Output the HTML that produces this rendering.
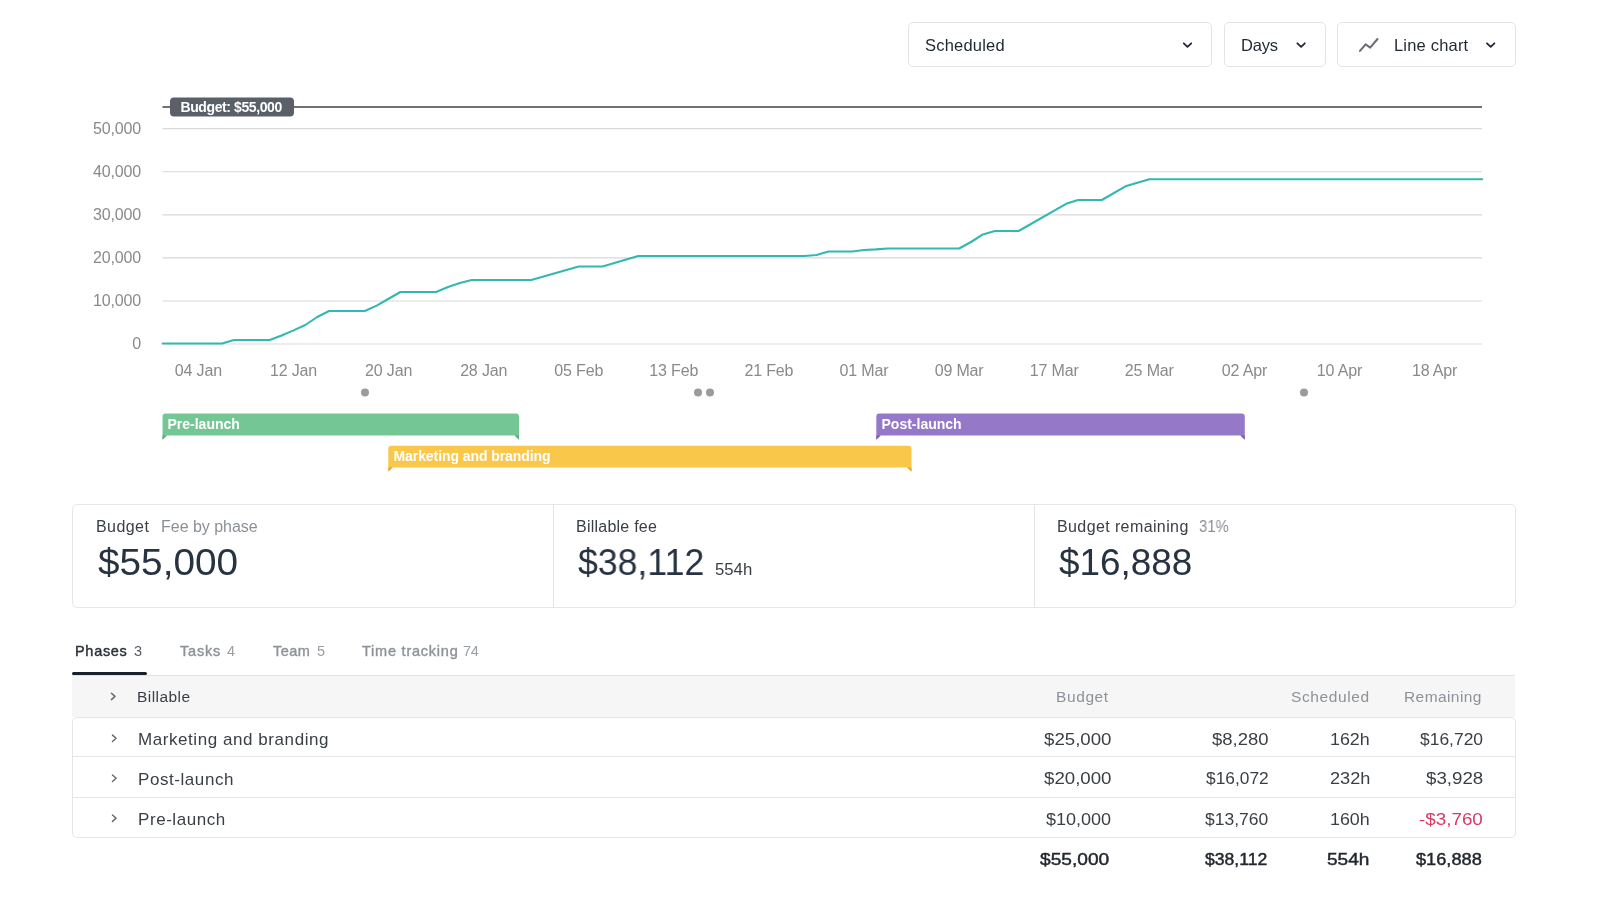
<!DOCTYPE html>
<html>
<head>
<meta charset="utf-8">
<style>
html,body{margin:0;padding:0;background:#fff;width:1600px;height:904px;overflow:hidden;font-family:"Liberation Sans",sans-serif;}
.abs{position:absolute;}
.t{position:absolute;white-space:nowrap;line-height:1;will-change:transform;}
.dd{position:absolute;top:22px;height:43px;border:1px solid #e2e4e9;border-radius:5px;box-sizing:content-box;background:#fff;}
.card{position:absolute;left:72px;top:504px;width:1442px;height:101px;border:1px solid #e3e3e3;border-radius:6px;}
.div{position:absolute;top:0;width:1px;height:101px;background:#e3e3e3;}
</style>
</head>
<body>

<!-- Dropdowns -->
<div class="dd" style="left:908px;width:302px;"></div>
<div class="dd" style="left:1224px;width:100px;"></div>
<div class="dd" style="left:1337px;width:177px;"></div>
<svg class="abs" style="left:0;top:0" width="1600" height="80">
  <polyline points="1183.8,43.3 1187.5,46.8 1191.2,43.3" fill="none" stroke="#1f2733" stroke-width="1.8" stroke-linecap="round" stroke-linejoin="round"/>
  <polyline points="1297.4,43.3 1301.1,46.8 1304.8,43.3" fill="none" stroke="#1f2733" stroke-width="1.8" stroke-linecap="round" stroke-linejoin="round"/>
  <polyline points="1487.0,43.3 1490.7,46.8 1494.4,43.3" fill="none" stroke="#1f2733" stroke-width="1.8" stroke-linecap="round" stroke-linejoin="round"/>
  <polyline points="1360,50.9 1365.6,44.3 1370.2,47.6 1377.5,39" fill="none" stroke="#686c72" stroke-width="2" stroke-linecap="round" stroke-linejoin="round"/>
</svg>

<!-- Chart -->
<svg class="abs" style="left:0;top:80px;will-change:transform;" width="1600" height="400" viewBox="0 80 1600 400">
  <g stroke="#d9d9d9" stroke-width="1.1">
    <line x1="162.5" y1="128.6" x2="1482" y2="128.6"/>
    <line x1="162.5" y1="171.8" x2="1482" y2="171.8"/>
    <line x1="162.5" y1="214.9" x2="1482" y2="214.9"/>
    <line x1="162.5" y1="257.9" x2="1482" y2="257.9"/>
    <line x1="162.5" y1="301.0" x2="1482" y2="301.0"/>
    <line x1="162.5" y1="344.0" x2="1482" y2="344.0"/>
  </g>
  <line x1="162.5" y1="107" x2="1482" y2="107" stroke="#717171" stroke-width="2"/>
  <g font-family="Liberation Sans" font-size="16" letter-spacing="-0.15" fill="#8a8a8a" text-anchor="end">
    <text x="141" y="134">50,000</text>
    <text x="141" y="177">40,000</text>
    <text x="141" y="220">30,000</text>
    <text x="141" y="263">20,000</text>
    <text x="141" y="306">10,000</text>
    <text x="141" y="349">0</text>
  </g>
  <g font-family="Liberation Sans" font-size="16" letter-spacing="-0.15" fill="#8a8a8a" text-anchor="middle">
    <text x="198.4" y="376">04 Jan</text>
    <text x="293.5" y="376">12 Jan</text>
    <text x="388.6" y="376">20 Jan</text>
    <text x="483.7" y="376">28 Jan</text>
    <text x="578.7" y="376">05 Feb</text>
    <text x="673.8" y="376">13 Feb</text>
    <text x="768.9" y="376">21 Feb</text>
    <text x="864.0" y="376">01 Mar</text>
    <text x="959.1" y="376">09 Mar</text>
    <text x="1054.2" y="376">17 Mar</text>
    <text x="1149.3" y="376">25 Mar</text>
    <text x="1244.4" y="376">02 Apr</text>
    <text x="1339.5" y="376">10 Apr</text>
    <text x="1434.6" y="376">18 Apr</text>
  </g>
  <polyline fill="none" stroke="#33b8b0" stroke-width="2.1" stroke-linejoin="round" stroke-linecap="round"
    points="162.7,343.5 222.1,343.5 234.0,340 269.7,340 281.6,335.5 293.5,330.4 305.3,325 317.2,317 329.1,311 364.8,311 376.7,305.6 388.6,298.75 400.4,292 436.1,292 448.0,287 459.9,283 471.8,280 531.2,280 578.7,266.5 602.5,266.5 638.2,256 804.6,256 816.5,255 828.4,251.5 852.1,251.5 864.0,250 875.9,249.4 887.8,248.5 959.1,248.5 971.0,242 982.9,234.4 994.8,231 1018.6,231 1066.1,203.8 1078.0,200 1101.8,200 1125.5,186.3 1137.4,182.8 1149.3,179.2 1482.2,179.2"/>
  <!-- budget label -->
  <rect x="170" y="97.5" width="124" height="19" rx="4" fill="#5a6068"/>
  <text x="180.5" y="111.5" font-family="Liberation Sans" font-weight="bold" font-size="14" letter-spacing="-0.4" fill="#fff">Budget: $55,000</text>
  <!-- dots -->
  <g fill="#9b9b9b">
    <circle cx="365" cy="392.4" r="4"/>
    <circle cx="698" cy="392.4" r="4"/>
    <circle cx="710" cy="392.4" r="4"/>
    <circle cx="1304" cy="392.4" r="4"/>
  </g>
  <!-- phase bars -->
  <path fill="#74c795" d="M162.5,439.5 L162.5,416.6 Q162.5,413.6 165.5,413.6 L516,413.6 Q519,413.6 519,416.6 L519,439.5 L515,435.5 L166.5,435.5 Z"/>
  <path fill="#f9c74a" d="M388.3,471.5 L388.3,448.7 Q388.3,445.7 391.3,445.7 L908.5,445.7 Q911.5,445.7 911.5,448.7 L911.5,471.5 L907.5,467.5 L392.3,467.5 Z"/>
  <path fill="#9678c9" d="M876.3,439.5 L876.3,416.6 Q876.3,413.6 879.3,413.6 L1241.8,413.6 Q1244.8,413.6 1244.8,416.6 L1244.8,439.5 L1240.8,435.5 L880.3,435.5 Z"/>
  <g>
    <path fill="#5fae80" d="M162.5,435.5 L167,435.5 L162.5,439.8 Z"/>
    <path fill="#5fae80" d="M519,435.5 L514.5,435.5 L519,439.8 Z"/>
    <path fill="#dcae3c" d="M388.3,467.5 L392.8,467.5 L388.3,471.8 Z"/>
    <path fill="#dcae3c" d="M911.5,467.5 L907,467.5 L911.5,471.8 Z"/>
    <path fill="#7d62ad" d="M876.3,435.5 L880.8,435.5 L876.3,439.8 Z"/>
    <path fill="#7d62ad" d="M1244.8,435.5 L1240.3,435.5 L1244.8,439.8 Z"/>
  </g>
  <g font-family="Liberation Sans" font-weight="bold" font-size="14" fill="#fff">
    <text x="167.5" y="429.2">Pre-launch</text>
    <text x="393.5" y="461" letter-spacing="-0.08">Marketing and branding</text>
    <text x="881.5" y="429.2">Post-launch</text>
  </g>
</svg>

<!-- GEN START -->
<div class="t" style="left:925.3px;top:36.83px;font-size:16.5px;font-weight:400;letter-spacing:0.2px;color:#1f2733;">Scheduled</div>
<div class="t" style="left:1241.3px;top:36.83px;font-size:16.5px;font-weight:400;letter-spacing:-0.214px;color:#1f2733;">Days</div>
<div class="t" style="left:1394.0px;top:36.83px;font-size:16.5px;font-weight:400;letter-spacing:0.191px;color:#1f2733;">Line chart</div>
<div class="abs" style="left:72px;top:504px;width:1444px;height:104px;box-sizing:border-box;border:1px solid #e6e6e6;border-radius:5px;"></div>
<div class="abs" style="left:553px;top:505px;width:1px;height:102px;background:#e4e4e4;"></div>
<div class="abs" style="left:1034px;top:505px;width:1px;height:102px;background:#e4e4e4;"></div>
<div class="t" style="left:95.5px;top:518.96px;font-size:16px;font-weight:400;letter-spacing:0.427px;color:#3b4048;">Budget</div>
<div class="t" style="left:160.5px;top:518.96px;font-size:16px;font-weight:400;letter-spacing:-0.023px;color:#8b9097;">Fee by phase</div>
<div class="t" style="left:97.5px;top:544.73px;font-size:36px;font-weight:400;letter-spacing:0px;color:#283341;transform:scaleX(1.0766);transform-origin:0 0;">$55,000</div>
<div class="t" style="left:576.2px;top:518.96px;font-size:16px;font-weight:400;letter-spacing:0.239px;color:#3b4048;">Billable fee</div>
<div class="t" style="left:578.0px;top:544.73px;font-size:36px;font-weight:400;letter-spacing:0px;color:#283341;transform:scaleX(0.9902);transform-origin:0 0;">$38,112</div>
<div class="t" style="left:715.4px;top:561.96px;font-size:16px;font-weight:400;letter-spacing:0px;color:#3b4048;transform:scaleX(1.0463);transform-origin:0 0;">554h</div>
<div class="t" style="left:1057.3px;top:518.96px;font-size:16px;font-weight:400;letter-spacing:0.392px;color:#3b4048;">Budget remaining</div>
<div class="t" style="left:1199.3px;top:518.96px;font-size:16px;font-weight:400;letter-spacing:0px;color:#8b9097;transform:scaleX(0.93);transform-origin:0 0;">31%</div>
<div class="t" style="left:1059.2px;top:544.73px;font-size:36px;font-weight:400;letter-spacing:0px;color:#283341;transform:scaleX(1.0247);transform-origin:0 0;">$16,888</div>
<div class="t" style="left:74.9px;top:643.98px;font-size:14.5px;font-weight:400;letter-spacing:0.697px;color:#2a3039;-webkit-text-stroke:0.4px #2a3039;">Phases</div>
<div class="t" style="left:134.4px;top:643.98px;font-size:14.5px;font-weight:400;letter-spacing:0px;color:#555b63;">3</div>
<div class="t" style="left:180px;top:643.98px;font-size:14.5px;font-weight:400;letter-spacing:0.796px;color:#8e9399;-webkit-text-stroke:0.4px #8e9399;">Tasks</div>
<div class="t" style="left:226.9px;top:643.98px;font-size:14.5px;font-weight:400;letter-spacing:0px;color:#9a9ea4;">4</div>
<div class="t" style="left:272.75px;top:643.98px;font-size:14.5px;font-weight:400;letter-spacing:0.457px;color:#8e9399;-webkit-text-stroke:0.4px #8e9399;">Team</div>
<div class="t" style="left:317px;top:643.98px;font-size:14.5px;font-weight:400;letter-spacing:0px;color:#9a9ea4;">5</div>
<div class="t" style="left:362px;top:643.98px;font-size:14.5px;font-weight:400;letter-spacing:0.773px;color:#8e9399;-webkit-text-stroke:0.4px #8e9399;">Time tracking</div>
<div class="t" style="left:463.2px;top:643.98px;font-size:14.5px;font-weight:400;letter-spacing:-0.314px;color:#9a9ea4;">74</div>
<div class="abs" style="left:72px;top:672px;width:75px;height:3px;background:#18202b;border-radius:2px;"></div>
<div class="abs" style="left:72px;top:675px;width:1443px;height:42px;background:#f6f6f6;border-top:1px solid #e2e2e2;box-sizing:border-box;"></div>
<div class="t" style="left:136.9px;top:688.78px;font-size:15.5px;font-weight:400;letter-spacing:0.449px;color:#3a3f46;">Billable</div>
<div class="t" style="left:1055.9px;top:688.78px;font-size:15.5px;font-weight:400;letter-spacing:0.606px;color:#8d9298;">Budget</div>
<div class="t" style="left:1290.5px;top:688.78px;font-size:15.5px;font-weight:400;letter-spacing:0.608px;color:#8d9298;">Scheduled</div>
<div class="t" style="left:1404.2px;top:688.78px;font-size:15.5px;font-weight:400;letter-spacing:0.416px;color:#8d9298;">Remaining</div>
<div class="abs" style="left:72px;top:717px;width:1444px;height:121px;box-sizing:border-box;border:1px solid #e6e6e6;border-radius:5px;background:#fff;"></div>
<div class="abs" style="left:73px;top:756px;width:1442px;height:1px;background:#e6e6e6;"></div>
<div class="abs" style="left:73px;top:797px;width:1442px;height:1px;background:#e6e6e6;"></div>
<div class="t" style="left:138.4px;top:731.01px;font-size:17px;font-weight:400;letter-spacing:0.564px;color:#3a3f46;">Marketing and branding</div>
<div class="t" style="left:138.4px;top:770.81px;font-size:17px;font-weight:400;letter-spacing:0.564px;color:#3a3f46;">Post-launch</div>
<div class="t" style="left:138.4px;top:810.81px;font-size:17px;font-weight:400;letter-spacing:0.564px;color:#3a3f46;">Pre-launch</div>
<div class="t" style="left:1043.6px;top:730.61px;font-size:17px;font-weight:400;letter-spacing:0px;color:#3a3f46;transform:scaleX(1.0984);transform-origin:0 0;">$25,000</div>
<div class="t" style="left:1212.0px;top:730.61px;font-size:17px;font-weight:400;letter-spacing:0px;color:#3a3f46;transform:scaleX(1.0865);transform-origin:0 0;">$8,280</div>
<div class="t" style="left:1330.25px;top:730.61px;font-size:17px;font-weight:400;letter-spacing:0px;color:#3a3f46;transform:scaleX(1.0505);transform-origin:0 0;">162h</div>
<div class="t" style="left:1420.0px;top:730.61px;font-size:17px;font-weight:400;letter-spacing:0px;color:#3a3f46;transform:scaleX(1.0263);transform-origin:0 0;">$16,720</div>
<div class="t" style="left:1043.6px;top:770.31px;font-size:17px;font-weight:400;letter-spacing:0px;color:#3a3f46;transform:scaleX(1.0984);transform-origin:0 0;">$20,000</div>
<div class="t" style="left:1205.8px;top:770.31px;font-size:17px;font-weight:400;letter-spacing:0px;color:#3a3f46;transform:scaleX(1.0197);transform-origin:0 0;">$16,072</div>
<div class="t" style="left:1329.6px;top:770.31px;font-size:17px;font-weight:400;letter-spacing:0px;color:#3a3f46;transform:scaleX(1.0679);transform-origin:0 0;">232h</div>
<div class="t" style="left:1425.9px;top:770.31px;font-size:17px;font-weight:400;letter-spacing:0px;color:#3a3f46;transform:scaleX(1.1001);transform-origin:0 0;">$3,928</div>
<div class="t" style="left:1046.0px;top:810.51px;font-size:17px;font-weight:400;letter-spacing:0px;color:#3a3f46;transform:scaleX(1.0591);transform-origin:0 0;">$10,000</div>
<div class="t" style="left:1205.2px;top:810.51px;font-size:17px;font-weight:400;letter-spacing:0px;color:#3a3f46;transform:scaleX(1.0296);transform-origin:0 0;">$13,760</div>
<div class="t" style="left:1330.25px;top:810.51px;font-size:17px;font-weight:400;letter-spacing:0px;color:#3a3f46;transform:scaleX(1.0505);transform-origin:0 0;">160h</div>
<div class="t" style="left:1419.3px;top:810.51px;font-size:17px;font-weight:400;letter-spacing:0px;color:#d83a64;transform:scaleX(1.1066);transform-origin:0 0;">-$3,760</div>
<div class="t" style="left:1040.2px;top:850.81px;font-size:17px;font-weight:400;letter-spacing:0px;color:#22272e;-webkit-text-stroke:0.45px #22272e;transform:scaleX(1.1263);transform-origin:0 0;">$55,000</div>
<div class="t" style="left:1205.2px;top:850.81px;font-size:17px;font-weight:400;letter-spacing:0px;color:#22272e;-webkit-text-stroke:0.45px #22272e;transform:scaleX(1.0346);transform-origin:0 0;">$38,112</div>
<div class="t" style="left:1326.5px;top:850.81px;font-size:17px;font-weight:400;letter-spacing:0px;color:#22272e;-webkit-text-stroke:0.45px #22272e;transform:scaleX(1.1214);transform-origin:0 0;">554h</div>
<div class="t" style="left:1415.9px;top:850.81px;font-size:17px;font-weight:400;letter-spacing:0px;color:#22272e;-webkit-text-stroke:0.45px #22272e;transform:scaleX(1.0706);transform-origin:0 0;">$16,888</div>
<svg class="abs" style="left:0;top:680px" width="200" height="160" viewBox="0 680 200 160"><g fill="none" stroke="#666a70" stroke-width="1.5" stroke-linecap="round" stroke-linejoin="round"><polyline points="111.4,693.1999999999999 115.0,696.4 111.4,699.6"/><polyline points="112.5,735.0999999999999 116.1,738.3 112.5,741.5"/><polyline points="112.5,775.05 116.1,778.25 112.5,781.45"/><polyline points="112.5,815.0 116.1,818.2 112.5,821.4000000000001"/></g></svg>
<!-- GEN END -->
</body>
</html>
